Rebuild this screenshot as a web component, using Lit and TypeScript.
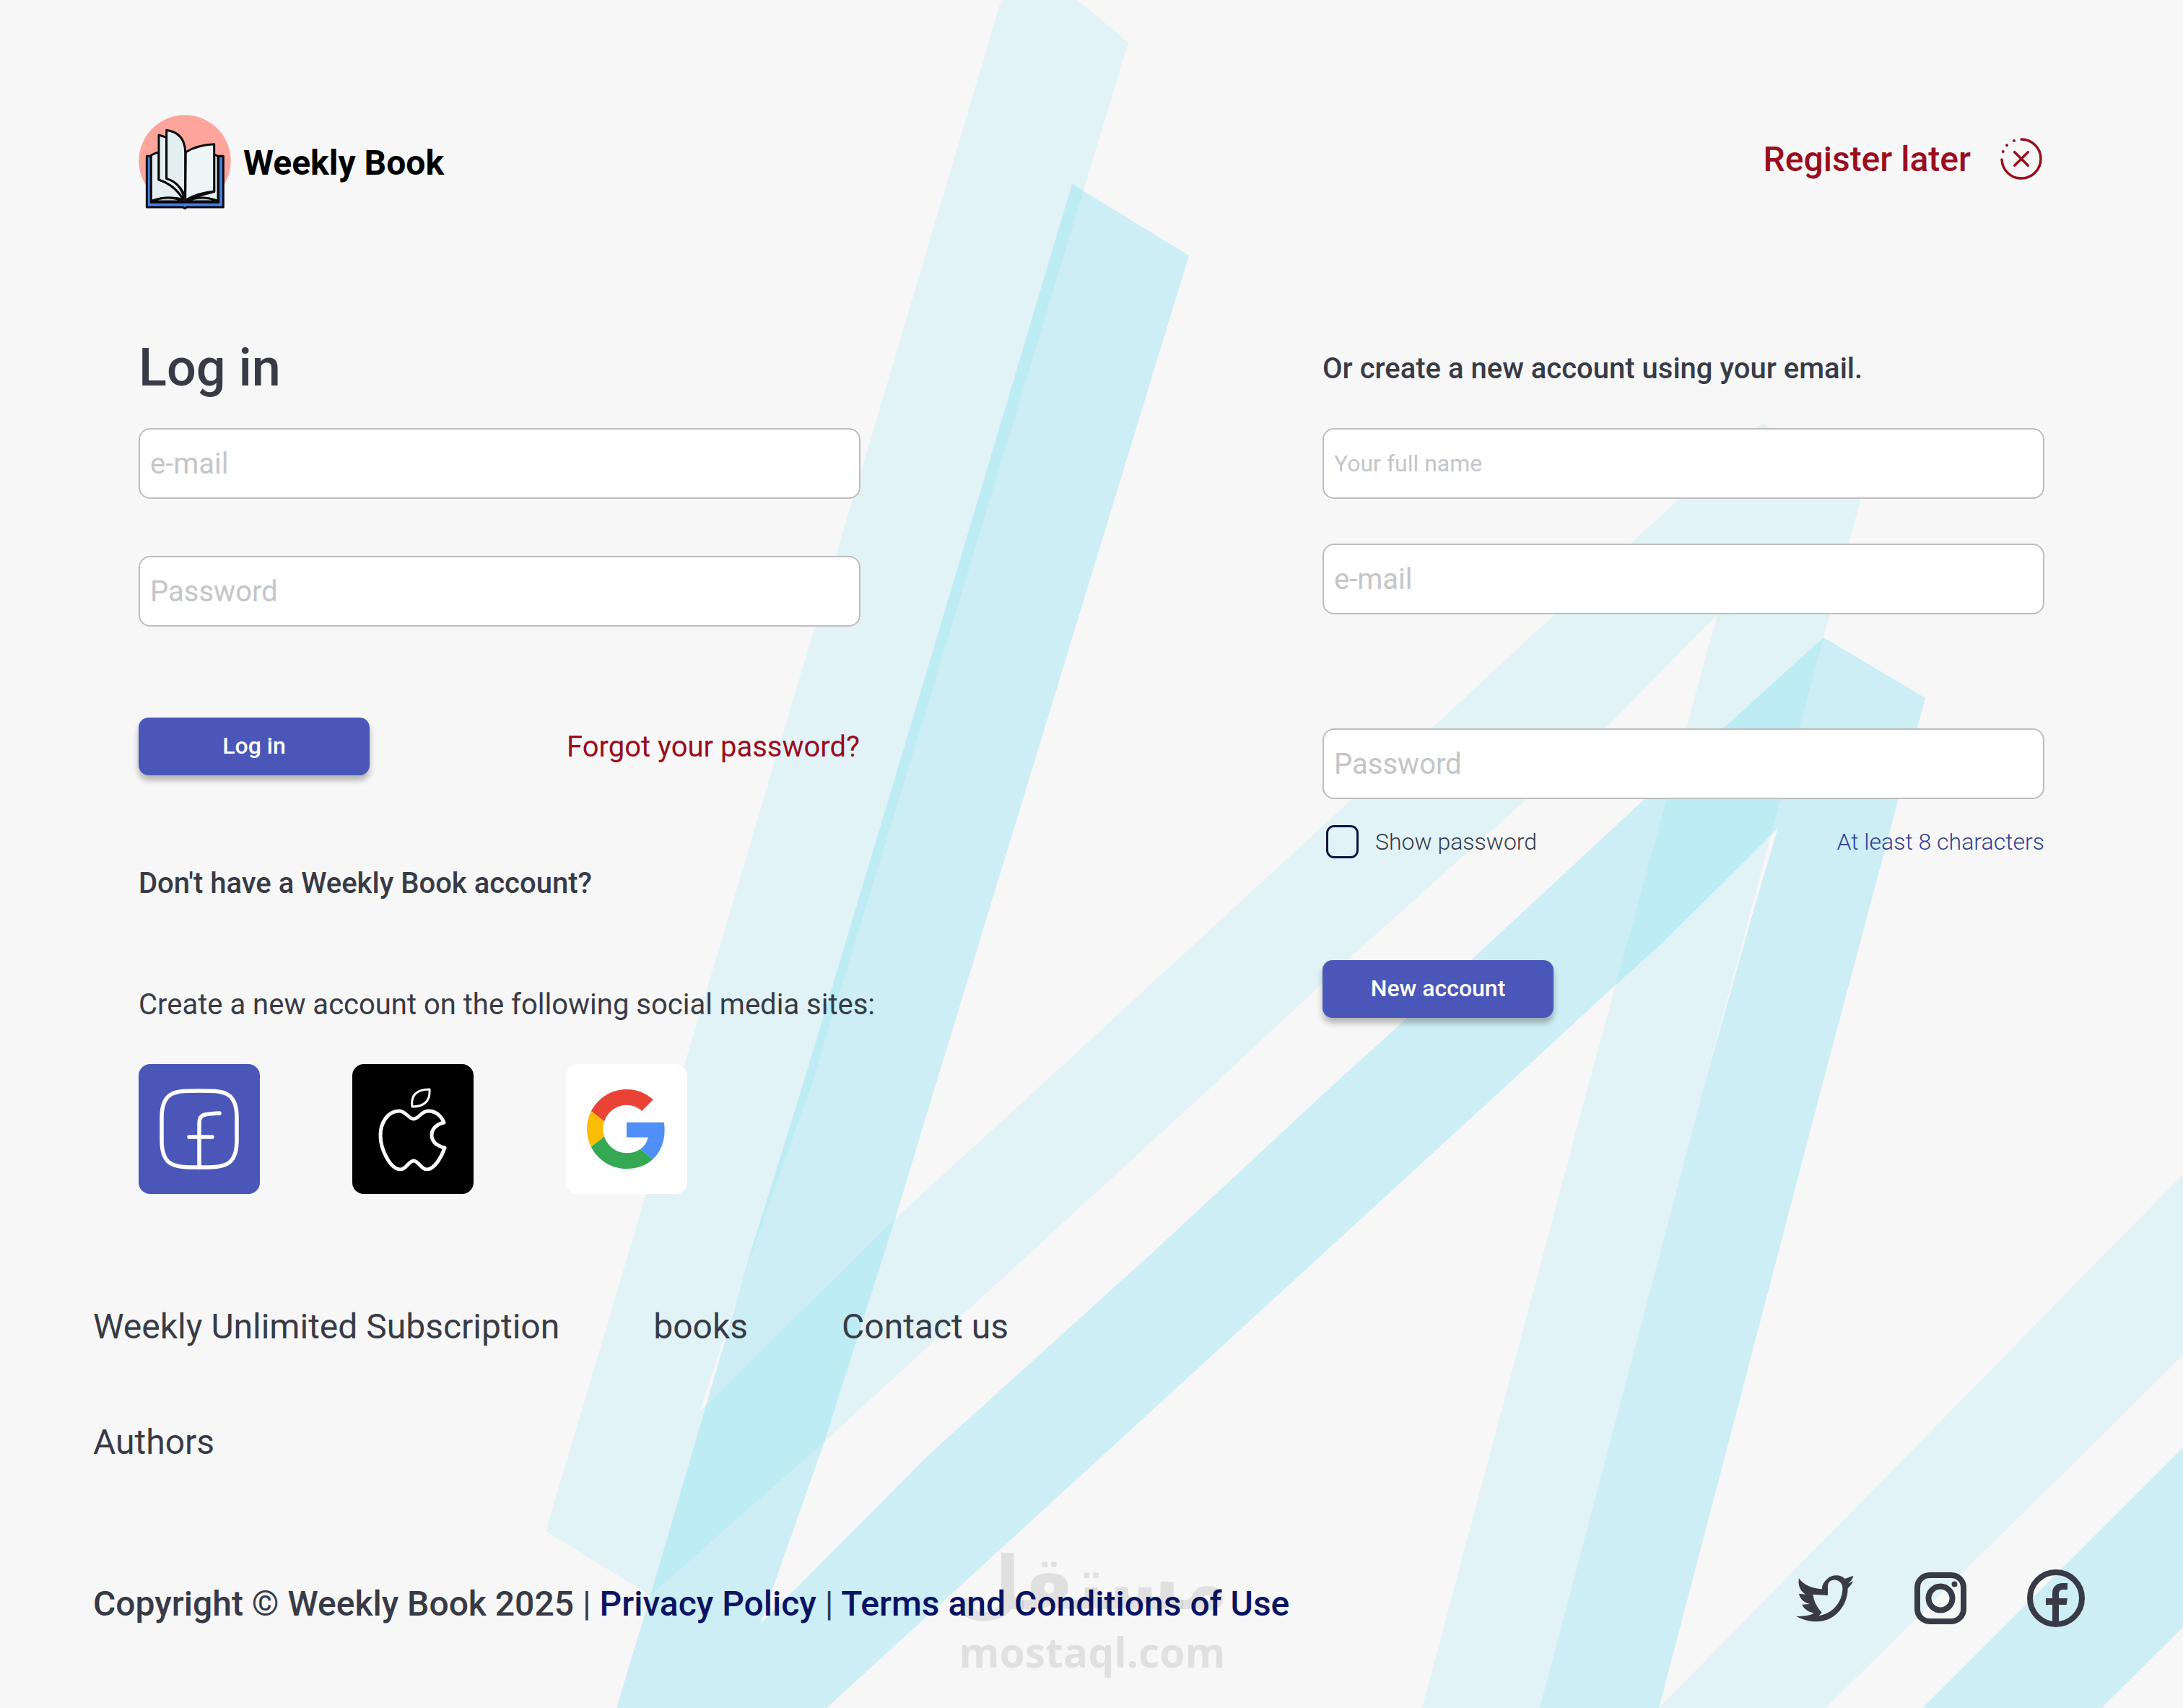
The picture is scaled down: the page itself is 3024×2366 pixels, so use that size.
import { LitElement, html, css, svg } from "lit";
import { customElement } from "lit/decorators.js";

const N1 = "1390,-10 1480,-10 1563,59 1278,1000 1125,1500 1040,1740 970,1953 978,1947 1240,1688 1446,1500 1600,1358 1874,1106 1982,1010 2154,851 2326,691 2442,586 2578,690 2526,883 2362,1500 2133,2366 1970,2366 2201,1500 2379,851 2223,1010 2116,1106 1874,1323 1684,1500 1600,1577 1142,1997 901,2210 756,2121";
const N2 = "1485,255 1647,354 1297,1500 1240,1688 1142,1997 1053,2250 1288,2014 1600,1732 1850,1500 2039,1329 2279,1106 2386,1010 2526,883 2667,967 2525,1500 2298,2366 2133,2366 2362,1500 2428,1265 2463,1147 2302,1307 2235,1367 2091,1500 1600,1950 1145,2366 854,2366 901,2210 978,1947 1044,1721 1113,1500 1263,1000";
const N3 = "3024,1627 2298,2366 2529,2366 3024,1877";
const N4 = "3024,2005 2663,2366 2911,2366 3024,2254";

@customElement("app-root")
export class AppRoot extends LitElement {
  static styles = css`
    :host { display: block; width: 3024px; height: 2366px; position: relative; overflow: hidden; background: #f7f7f7; font-family: Roboto, "Liberation Sans", sans-serif; color: #383b46; }
    * { box-sizing: border-box; }
    .bg { position: absolute; inset: 0; width: 3024px; height: 2366px; }
    .light { fill: #e1f3f6; }
    .blue { fill: rgba(115, 222, 241, 0.32); }
    .page { position: relative; display: flex; flex-direction: column; height: 100%; padding-top: 160px; }
    header { display: flex; justify-content: space-between; align-items: center; height: 130px; margin: 0 192px; }
    .brand { display: flex; align-items: center; gap: 17px; height: 130px; font-size: 48px; font-weight: 700; color: #000; }
    .brand svg { width: 128px; height: 132px; flex: none; }
    .later { display: flex; align-items: center; gap: 40px; margin-right: 2px; margin-bottom: 10px; font-size: 48px; font-weight: 500; color: #9a0e1d; }
    .later svg { width: 60px; height: 60px; }
    .cols { display: grid; grid-template-columns: 1000px 1000px; column-gap: 640px; margin: 180px 192px 0; }
    .col { display: flex; flex-direction: column; align-items: stretch; }
    h1 { margin: 0 0 43px; font-size: 72px; line-height: 80px; font-weight: 500; }
    .sub { font-size: 40px; line-height: 48px; font-weight: 500; margin: 0; }
    input.field { display: block; width: 100%; height: 98px; border: 2px solid #bdbdbd; border-radius: 16px; background: #fff; padding: 0 14px; font: 400 40px Roboto, sans-serif; outline: none; }
    input.field::placeholder { color: #c4c5c9; opacity: 1; }
    input.small { font-size: 32px; }
    .mb80 { margin-bottom: 79px; }
    .mb128 { margin-bottom: 126px; }
    .actions { display: flex; justify-content: space-between; align-items: center; height: 80px; }
    .btn { width: 320px; height: 80px; border: none; border-radius: 14px; background: #4b57b8; color: #fff; font: 500 32px Roboto, sans-serif; box-shadow: 0 7px 8px rgba(0, 0, 0, 0.28); padding: 0 0 2px; }
    .forgot { font-size: 40px; color: #9a0e1d; margin-right: 1px; }
    .donthave { margin-top: 126px; }
    .create { margin: 120px 0 58px; font-size: 40px; line-height: 48px; white-space: nowrap; }
    .tiles { display: flex; gap: 128px; }
    .tile { width: 168px; height: 180px; border-radius: 16px; display: flex; align-items: center; justify-content: center; }
    .tile.f { background: #4b57b8; }
    .tile.a { background: #000; }
    .tile.g { background: #fff; }
    .rightcol .sub { margin: 17px 0 58px; }
    .mb63 { margin-bottom: 62px; }
    .mb159 { margin-bottom: 158px; }
    .checkrow { display: flex; align-items: center; margin: 36px 0 141px; height: 46px; font-size: 32px; font-weight: 300; line-height: 44px; }
    .box { width: 45px; height: 46px; margin-left: 5px; margin-right: 23px; border: 3px solid #0e1442; border-radius: 11px; flex: none; }
    .hint { margin-left: auto; color: #2f3f96; }
    .nav { display: flex; flex-wrap: wrap; column-gap: 130px; row-gap: 96px; width: 1500px; margin: 152px 0 0 129px; font-size: 48px; line-height: 64px; }
    .bottom { display: flex; justify-content: space-between; margin: 160px 136px 0 129px; font-size: 48px; line-height: 64px; font-weight: 500; }
    .bottom a { color: #0a1464; text-decoration: none; }
    .bottom .sep { font-weight: 400; }
    .social { display: flex; align-items: center; gap: 84px; height: 80px; margin-top: -16px; }
    .wm { position: absolute; left: 1330px; top: 2128px; width: 366px; display: flex; flex-direction: column; align-items: center; color: rgba(0, 0, 0, 0.09); pointer-events: none; }
    .wm .ar { font: 700 103px/130px "DejaVu Sans", sans-serif; height: 130px; }
    .wm .en { font: 700 57px/60px "Open Sans", sans-serif; }
  `;

  render() {
    return html`
      <svg class="bg" viewBox="0 0 3024 2366" aria-hidden="true">
        ${svg`<polygon class="light" points=${N1}></polygon>
        <polygon class="blue" points=${N2}></polygon>
        <polygon class="light" points=${N3}></polygon>
        <polygon class="blue" points=${N4}></polygon>`}
      </svg>
      <div class="page">
        <header>
          <div class="brand">
            <svg viewBox="66 60 384 396" stroke="#0b0b0d" stroke-width="9" stroke-linejoin="round">
              <circle cx="258" cy="252" r="191" fill="#fda59d" stroke="none"></circle>
              <path d="M100 232H118V424H398V232H418V444H266L258 449L250 444H100Z" fill="#4a7fe6"></path>
              <path d="M118 228Q135 218 150 215V330Q215 350 252 412Q190 395 118 418Z" fill="#e3eff1"></path>
              <path d="M150 144L182 154V325Q235 340 252 395V412Q215 350 150 330Z" fill="#e3eff1"></path>
              <path d="M182 124Q258 135 260 215V400Q235 340 182 325Z" fill="#e3eff1"></path>
              <path d="M380 225L396 232V418Q330 395 262 415Q320 395 380 380Z" fill="#e3eff1"></path>
              <path d="M262 215Q310 185 380 182V378Q310 385 260 415Z" fill="#eef5f6"></path>
              <path d="M118 420Q190 390 254 420ZM262 420Q330 390 398 420Z" fill="#b9d3d9"></path>
            </svg>
            <span>Weekly Book</span>
          </div>
          <div class="later">
            <span>Register later</span>
            <svg viewBox="0 0 60 60" fill="none" stroke="#9a0e1d" stroke-width="3.5" stroke-linecap="round">
              <path d="M30 3A27 27 0 1 1 3 31"></path>
              <path d="M20 5h.01M10 11.3h.01M4.7 20h.01" stroke-width="4"></path>
              <path d="M20.7 20.7L39.3 39.3M39.3 20.7L20.7 39.3"></path>
            </svg>
          </div>
        </header>

        <div class="cols">
          <div class="col">
            <h1>Log in</h1>
            <input class="field mb80" placeholder="e-mail" />
            <input class="field mb128" placeholder="Password" />
            <div class="actions">
              <button class="btn">Log in</button>
              <span class="forgot">Forgot your password?</span>
            </div>
            <p class="sub donthave">Don't have a Weekly Book account?</p>
            <div class="create">Create a new account on the following social media sites:</div>
            <div class="tiles">
              <div class="tile f">
                <svg width="110" height="112" viewBox="0 0 110 112" fill="none" stroke="#fff" stroke-width="5.5" stroke-linecap="round">
                  <path d="M55 3C22 3 3 3 3 40V72C3 109 22 109 55 109S107 109 107 72V40C107 3 88 3 55 3Z"></path>
                  <path d="M55 109V48C55 36 60 35 83 34M41 67H73"></path>
                </svg>
              </div>
              <div class="tile a">
                <svg width="96" height="116" viewBox="0 0 96 116" fill="none" stroke="#fff" stroke-width="5" stroke-linejoin="round" stroke-linecap="round">
                  <path d="M49 44C42 44 38 33 29 33C14 33 3 48 3 67C3 85 16 114 31 114C39 114 42 102 49 102C56 102 59 114 67 114C78 114 88 96 92 84C80 81 74 75 74 66C74 60 78 52 91 49C87 40 80 33 69 33C60 33 56 44 49 44Z"></path>
                  <path d="M47 27C45 12 52 3 71 3C72 18 65 27 47 27Z" stroke-width="3"></path>
                </svg>
              </div>
              <div class="tile g">
                <svg width="110" height="112" viewBox="0 0 48 48">
                  <path fill="#EA4335" d="M24 9.5c3.54 0 6.71 1.22 9.21 3.6l6.85-6.85C35.9 2.38 30.47 0 24 0 14.62 0 6.51 5.38 2.56 13.22l7.98 6.19C12.43 13.72 17.74 9.5 24 9.5z"></path>
                  <path fill="#508ff7" d="M46.98 24.55c0-1.57-.15-3.09-.38-4.55H24v9.02h12.94c-.58 2.96-2.26 5.48-4.78 7.18l7.73 6c4.51-4.18 7.09-10.36 7.09-17.65z"></path>
                  <path fill="#FBBC05" d="M10.53 28.59c-.48-1.45-.76-2.99-.76-4.59s.27-3.14.76-4.59l-7.98-6.19C.92 16.46 0 20.12 0 24c0 3.88.92 7.54 2.56 10.78l7.97-6.19z"></path>
                  <path fill="#34A853" d="M24 48c6.48 0 11.93-2.13 15.89-5.81l-7.73-6c-2.15 1.45-4.92 2.3-8.16 2.3-6.26 0-11.57-4.22-13.47-9.91l-7.98 6.19C6.51 42.62 14.62 48 24 48z"></path>
                </svg>
              </div>
            </div>
          </div>

          <div class="col rightcol">
            <p class="sub">Or create a new account using your email.</p>
            <input class="field small mb63" placeholder="Your full name" />
            <input class="field mb159" placeholder="e-mail" />
            <input class="field" placeholder="Password" />
            <div class="checkrow">
              <span class="box"></span>
              <span>Show password</span>
              <span class="hint">At least 8 characters</span>
            </div>
            <div><button class="btn">New account</button></div>
          </div>
        </div>

        <nav class="nav">
          <span>Weekly Unlimited Subscription</span>
          <span>books</span>
          <span>Contact us</span>
          <span>Authors</span>
        </nav>

        <footer class="bottom">
          <div>Copyright © Weekly Book 2025 <span class="sep">|</span> <a>Privacy Policy</a> <span class="sep">|</span> <a>Terms and Conditions of Use</a></div>
          <div class="social">
            <svg width="80" height="66" viewBox="85 122 240 198" fill="#383b46" fill-rule="evenodd">
              <path d="M323 127L288 140C270 120 235 122 215 140C198 155 192 170 193 183C150 180 115 165 97 138C92 165 100 190 125 205L97 202C102 225 120 240 143 245L110 247C118 265 135 278 160 282C140 295 110 297 85 295C115 312 150 320 180 317C250 312 300 250 300 180C308 172 318 160 323 150L300 160C312 152 320 140 323 127ZM155 205L217 209V170C218 150 235 142 250 145C270 148 280 165 278 185C275 240 235 285 180 293L192 280C170 255 160 235 155 205Z"></path>
            </svg>
            <svg width="72" height="72" viewBox="0 0 72 72" fill="none" stroke="#383b46" stroke-width="8">
              <rect x="4" y="4" width="64" height="64" rx="17"></rect>
              <circle cx="36" cy="36" r="16.5"></circle>
              <circle cx="55.5" cy="16.5" r="4" fill="#383b46" stroke="none"></circle>
            </svg>
            <svg width="80" height="80" viewBox="0 0 80 80" fill="none">
              <circle cx="40" cy="40" r="36" stroke="#383b46" stroke-width="8"></circle>
              <path fill="#383b46" d="M35 75V49H26V40H35V33C35 24 41 19 49 19H56V28H50C46 28 44 30 44 34V40H56L54.5 49H44V75Z"></path>
            </svg>
          </div>
        </footer>
      </div>
      <div class="wm" aria-hidden="true">
        <div class="ar">مستقل</div>
        <div class="en">mostaql.com</div>
      </div>
    `;
  }
}
